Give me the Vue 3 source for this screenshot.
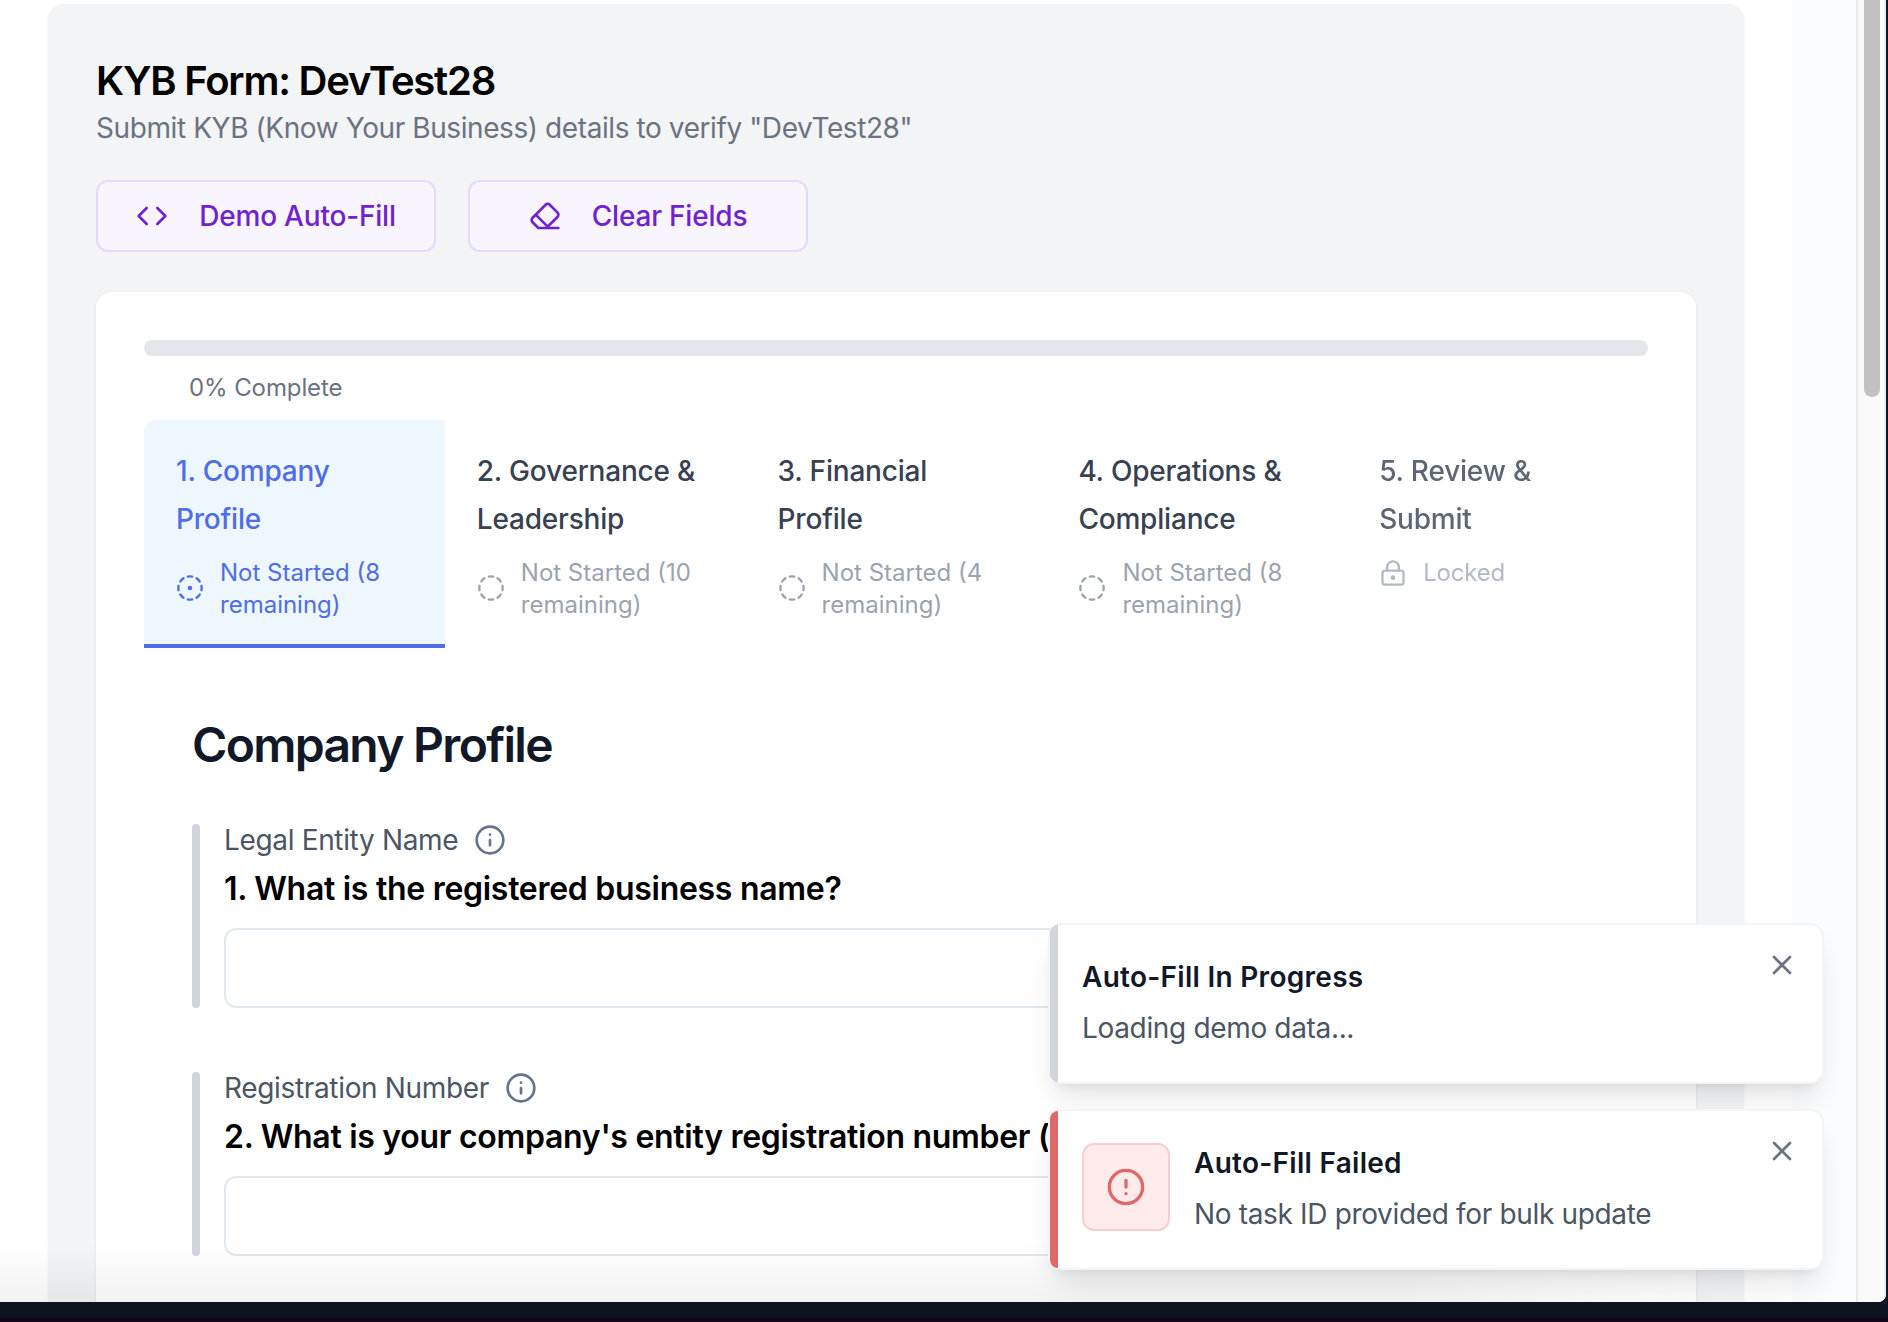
<script setup>
const tabs = [
  { title: '1. Company Profile', status: 'Not Started (8 remaining)', state: 'active' },
  { title: '2. Governance & Leadership', status: 'Not Started (10 remaining)', state: 'idle' },
  { title: '3. Financial Profile', status: 'Not Started (4 remaining)', state: 'idle' },
  { title: '4. Operations & Compliance', status: 'Not Started (8 remaining)', state: 'idle' },
  { title: '5. Review & Submit', status: 'Locked', state: 'locked' },
]
const fields = [
  { label: 'Legal Entity Name', question: '1. What is the registered business name?' },
  { label: 'Registration Number', question: "2. What is your company's entity registration number (EIN)?" },
]
</script>

<template>
  <div class="desktop">
    <div class="window">
      <main class="page">
        <section class="panel">
          <h1>KYB Form: DevTest28</h1>
          <p class="subtitle">Submit KYB (Know Your Business) details to verify "DevTest28"</p>
          <div class="actions">
            <button class="btn">
              <svg width="32" height="32" viewBox="0 0 24 24"><path d="m16 18 6-6-6-6M8 6l-6 6 6 6" /></svg>
              <span>Demo Auto-Fill</span>
            </button>
            <button class="btn">
              <svg width="32" height="32" viewBox="0 0 24 24"><path d="m7 21-4.3-4.3c-1-1-1-2.5 0-3.4l9.6-9.6c1-1 2.5-1 3.4 0l5.6 5.6c1 1 1 2.5 0 3.4L13 21M22 21H7m-2-10 9 9" /></svg>
              <span>Clear Fields</span>
            </button>
          </div>

          <div class="card">
            <div class="progress"></div>
            <div class="percent">0% Complete</div>
            <div class="tabs">
              <div v-for="t in tabs" :key="t.title" class="tab" :class="t.state">
                <div class="tab-title">{{ t.title }}</div>
                <div class="tab-status">
                  <svg v-if="t.state === 'locked'" width="28" height="28" viewBox="0 0 24 24"><rect x="3" y="10" width="18" height="12" rx="2" /><path d="M7 10V7a5 5 0 0 1 10 0v3" /><circle class="dot" cx="12" cy="16" r="2" /></svg>
                  <svg v-else width="28" height="28" viewBox="0 0 24 24">
                    <path d="M10.1 2.18a9.93 9.93 0 0 1 3.8 0M17.6 3.71a9.95 9.95 0 0 1 2.69 2.7M21.82 10.1a9.93 9.93 0 0 1 0 3.8M20.29 17.6a9.95 9.95 0 0 1-2.7 2.69M13.9 21.82a9.94 9.94 0 0 1-3.8 0M6.4 20.29a9.95 9.95 0 0 1-2.69-2.7M2.18 13.9a9.93 9.93 0 0 1 0-3.8M3.71 6.4a9.95 9.95 0 0 1 2.7-2.69" />
                    <circle v-if="t.state === 'active'" class="dot" cx="12" cy="12" r="2" />
                  </svg>
                  <span>{{ t.status }}</span>
                </div>
              </div>
            </div>

            <div class="form">
              <h2>Company Profile</h2>
              <div v-for="f in fields" :key="f.label" class="field">
                <div class="label">
                  <span>{{ f.label }}</span>
                  <svg width="32" height="32" viewBox="0 0 24 24"><circle cx="12" cy="12" r="10" /><path d="M12 16v-4M12 8h.01" /></svg>
                </div>
                <div class="question">{{ f.question }}</div>
                <input class="input" type="text" />
              </div>
            </div>
          </div>
        </section>
      </main>
      <div class="scrollbar"><div class="thumb"></div></div>
      <div class="fade"></div>
      <div class="toasts">
        <div class="toast">
          <div>
            <div class="toast-title">Auto-Fill In Progress</div>
            <div class="toast-text">Loading demo data...</div>
          </div>
          <svg class="close" width="32" height="32" viewBox="0 0 24 24"><path d="M18 6 6 18M6 6l12 12" /></svg>
        </div>
        <div class="toast error">
          <div class="badge">
            <svg width="40" height="40" viewBox="0 0 24 24"><circle cx="12" cy="12" r="10" /><path d="M12 8v4M12 16h.01" /></svg>
          </div>
          <div>
            <div class="toast-title">Auto-Fill Failed</div>
            <div class="toast-text">No task ID provided for bulk update</div>
          </div>
          <svg class="close" width="32" height="32" viewBox="0 0 24 24"><path d="M18 6 6 18M6 6l12 12" /></svg>
        </div>
      </div>
    </div>
  </div>
</template>

<style>
body { overflow: hidden; }
</style>

<style scoped>
* { box-sizing: border-box; margin: 0; }
svg { fill: none; stroke: currentColor; stroke-width: 2; stroke-linecap: round; stroke-linejoin: round; flex: none; display: block; }
.dot { fill: currentColor; stroke: none; }
.desktop { width: 1888px; height: 1322px; padding-right: 2px; background: linear-gradient(#0d1420 1318px, #13051a 1318px); font-family: Inter, "Liberation Sans", sans-serif; }
.window { position: relative; display: flex; height: 1302px; overflow: hidden; background: #fbfcfe; border-bottom-right-radius: 8px; }
.page { width: 1792px; height: 1302px; padding: 4px 48px 0; background: #fff; overflow: hidden; }
.panel { height: 1500px; padding: 53px 48px; background: #f3f4f6; border-radius: 16px; box-shadow: 0 0 3px rgba(0, 0, 0, .05); }
h1 { font-size: 40px; line-height: 48px; font-weight: 600; letter-spacing: -1.22px; color: #000; white-space: nowrap; }
.subtitle { margin-top: 3px; font-size: 28px; line-height: 41px; letter-spacing: -.41px; color: #6b7280; white-space: nowrap; }
.actions { display: flex; gap: 32px; margin-top: 31px; }
.btn { display: flex; align-items: center; justify-content: center; gap: 31px; width: 340px; height: 72px; padding: 0; border: 2px solid #e7d6fd; border-radius: 12px; background: #f9f5ff; color: #7022ce; font: 500 28px/40px Inter, sans-serif; letter-spacing: -.2px; white-space: nowrap; }
.card { margin-top: 40px; height: 1200px; padding: 48px; background: #fff; border-radius: 16px; box-shadow: 0 1px 4px rgba(0, 0, 0, .06); }
.progress { height: 16px; border-radius: 8px; background: #e5e6eb; }
.percent { margin: 16px 0 0 45px; font-size: 24px; line-height: 32px; letter-spacing: -.1px; color: #6b7280; }
.tabs { display: grid; grid-template-columns: repeat(5, 1fr); margin-top: 16px; height: 228px; }
.tab { padding: 27px 32px 0; border-bottom: 4px solid transparent; color: #374151; }
.tab-title { width: 236px; font-size: 28px; line-height: 48px; font-weight: 500; letter-spacing: -.2px; }
.tab-status { display: flex; align-items: center; gap: 16px; margin-top: 14px; font-size: 24px; line-height: 32px; color: #9ca3af; }
.idle .tab-status svg, .active .tab-status svg { margin-bottom: 2px; }
.active { background: #eef6fe; color: #4f6de6; border-bottom-color: #4f6de6; border-top-left-radius: 12px; }
.active .tab-status { color: #4f6de6; }
.locked .tab-title { opacity: .8; }
.locked .tab-status { opacity: .75; }
.locked .tab-status span { letter-spacing: -.2px; }
.form { padding: 63px 48px 0; }
h2 { font-size: 48px; line-height: 68px; font-weight: 600; letter-spacing: -1.7px; color: #111827; }
.field { position: relative; height: 184px; margin: 45px 0 64px; padding-left: 32px; }
.field + .field { margin-top: 0; }
.field::before { content: ""; position: absolute; left: 0; top: 0; width: 8px; height: 184px; border-radius: 4px; background: #d1d5db; }
.label { display: flex; align-items: center; gap: 16px; height: 32px; font-size: 28px; letter-spacing: -.34px; color: #4b5563; }
.label svg { color: #64748b; }
.question { margin-top: 11px; font-size: 32px; line-height: 44px; font-weight: 600; letter-spacing: -.29px; color: #000; white-space: nowrap; }
.input { display: block; width: 100%; height: 80px; margin-top: 17px; border: 2px solid #e2e8f0; border-radius: 12px; background: transparent; }
.scrollbar { margin-left: 64px; width: 30px; border-left: 2px solid #e8e8e8; border-right: 2px solid #ededed; background: #fafafa; padding-left: 6px; }
.thumb { width: 16px; height: 397px; background: #c1c1c1; border-radius: 0 0 8px 8px; }
.fade { position: absolute; left: 0; bottom: 0; width: 1792px; height: 58px; background: linear-gradient(transparent, rgba(0, 0, 0, .05)); mask-image: linear-gradient(90deg, #000 1400px, transparent 1792px); }
.toasts { position: absolute; left: 1048px; top: 923px; width: 776px; display: flex; flex-direction: column; gap: 25px; }
.toast { position: relative; display: flex; gap: 24px; height: 161px; padding: 30px 24px 0 32px; border: 2px solid #f3f4f6; border-radius: 14px; background: #fff; box-shadow: 0 20px 30px -6px rgba(0, 0, 0, .1), 0 8px 12px -8px rgba(0, 0, 0, .1); }
.toast::before { content: ""; position: absolute; inset: 0 auto 0 0; width: 8px; border-radius: 12px 0 0 12px / 12px 0 0 12px; background: #d1d5db; }
.error::before { background: #df6969; }
.toast-title { font-size: 28px; line-height: 44px; font-weight: 600; letter-spacing: .28px; color: #111827; white-space: nowrap; }
.toast-text { margin-top: 8px; font-size: 28px; line-height: 42px; letter-spacing: -.34px; color: #4b5563; white-space: nowrap; }
.badge { display: grid; place-items: center; width: 88px; height: 88px; margin-top: 2px; border: 2px solid #f8ced1; border-radius: 12px; background: #fdebec; color: #df6969; }
.close { position: absolute; right: 24px; top: 24px; color: #6b7280; }
</style>
